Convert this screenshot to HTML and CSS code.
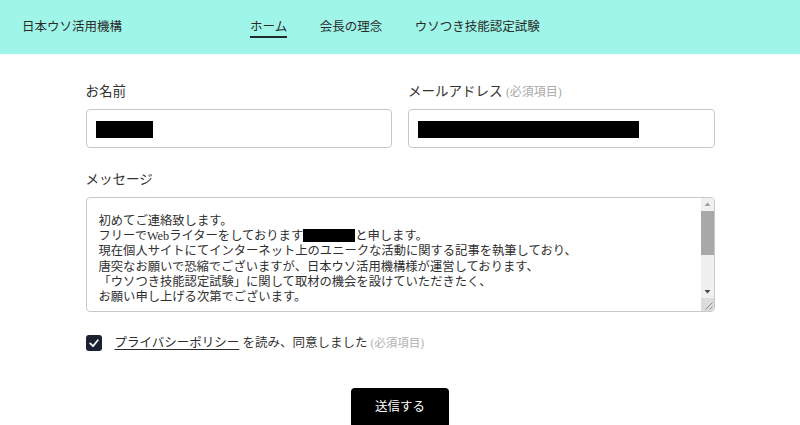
FILE: index.html
```html
<!DOCTYPE html>
<html lang="ja">
<head>
<meta charset="utf-8">
<title>お問い合わせ | 日本ウソ活用機構</title>
<link rel="stylesheet" href="styles.css">
</head>
<body>
<header class="site-header">
  <a class="logo" href="#">日本ウソ活用機構</a>
  <nav class="nav">
    <a class="nav-item active" href="#">ホーム</a>
    <a class="nav-item" href="#">会長の理念</a>
    <a class="nav-item" href="#">ウソつき技能認定試験</a>
  </nav>
</header>

<main class="contact">
  <div class="field-row">
    <div class="field">
      <div class="field-label">お名前</div>
      <div class="input"><span class="redact redact-name"></span></div>
    </div>
    <div class="field">
      <div class="field-label">メールアドレス <span class="required">(必須項目)</span></div>
      <div class="input"><span class="redact redact-mail"></span></div>
    </div>
  </div>

  <div class="field message-field">
    <div class="field-label">メッセージ</div>
    <div class="message-box">
      <div class="message-text" role="textbox" aria-multiline="true">初めてご連絡致します。<br>フリーでWebライターをしております<span class="redact redact-inline"></span>と申します。<br>現在個人サイトにてインターネット上のユニークな活動に関する記事を執筆しており、<br>唐突なお願いで恐縮でございますが、日本ウソ活用機構様が運営しております、<br>「ウソつき技能認定試験」に関して取材の機会を設けていただきたく、<br>お願い申し上げる次第でございます。</div>
      <div class="scrollbar" aria-hidden="true">
        <div class="sb-button">
          <svg width="13" height="13" viewBox="0 0 13 13"><path d="M3.5 8h6L6.5 4.5z" fill="#a0a0a0"/></svg>
        </div>
        <div class="sb-track"><div class="sb-thumb"></div></div>
        <div class="sb-button">
          <svg width="13" height="13" viewBox="0 0 13 13"><path d="M3.5 5h6L6.5 8.5z" fill="#4a4a4a"/></svg>
        </div>
        <div class="sb-corner">
          <svg width="13" height="13" viewBox="0 0 13 13"><path d="M11.5 4.5L4.5 11.5M11.5 8.5L8.5 11.5" stroke="#8a8a8a" stroke-width="1" fill="none"/></svg>
        </div>
      </div>
    </div>
  </div>

  <label class="agree">
    <span class="checkbox"><svg width="16" height="16" viewBox="0 0 16 16"><polyline points="4.2,8.4 7,11.2 11.8,5.2" fill="none" stroke="#fff" stroke-width="1.8" stroke-linecap="round" stroke-linejoin="round"/></svg></span>
    <span class="agree-text"><a class="policy-link" href="#">プライバシーポリシー</a> を読み、同意しました <span class="required small">(必須項目)</span></span>
  </label>

  <div class="actions">
    <button class="submit" type="button">送信する</button>
  </div>
</main>
</body>
</html>
```

FILE: styles.css
```css
html, body {
  margin: 0;
  padding: 0;
  background: #fff;
}

body {
  font-family: "Liberation Serif", "Noto Sans CJK JP", serif;
  color: #333;
  overflow: hidden;
}

a {
  color: inherit;
  text-decoration: none;
}

/* Header */
.site-header {
  display: flex;
  align-items: center;
  height: 54px;
  padding-left: 22px;
  background: #9ef5e8;
}

.logo {
  font-size: 12.5px;
  line-height: 16px;
  color: #2b2b2b;
}

.nav {
  display: flex;
  gap: 32.5px;
  margin-left: 128px;
}

.nav-item {
  font-size: 12.5px;
  line-height: 16px;
  padding: 3px 0 1px;
  border-bottom: 2px solid transparent;
  color: #2b2b2b;
}

.nav-item.active {
  border-bottom-color: #1e2a2a;
}

/* Form */
.contact {
  width: 629px;
  margin: 0 auto;
  padding-top: 28px;
}

.field-row {
  display: grid;
  grid-template-columns: 1fr 1fr;
  gap: 16px;
}

.field-label {
  font-size: 13.5px;
  line-height: 20px;
  margin-bottom: 7px;
  color: #333;
}

.required {
  font-size: 12px;
  color: #aaa;
}

.input {
  box-sizing: border-box;
  height: 39px;
  border: 1px solid #c8c8c8;
  border-radius: 4px;
  background: #fff;
  padding: 11px 9px 0;
  display: flex;
  align-items: flex-start;
}

.redact {
  display: inline-block;
  background: #000;
}

.redact-name {
  width: 57px;
  height: 17px;
}

.redact-mail {
  width: 221px;
  height: 17px;
}

.redact-inline {
  width: 52px;
  height: 13px;
  vertical-align: -2px;
}

.message-field {
  margin-top: 22px;
}

.message-box {
  box-sizing: border-box;
  height: 115px;
  border: 1px solid #c8c8c8;
  border-radius: 4px;
  display: flex;
  overflow: hidden;
  background: #fff;
}

.message-text {
  flex: 1;
  padding: 16px 12px 0;
  font-size: 12.3px;
  line-height: 15.2px;
  color: #2f2f2f;
}

/* Scrollbar drawn to match the classic textarea scrollbar */
.scrollbar {
  width: 13px;
  display: flex;
  flex-direction: column;
  background: #f0f0f0;
}

.sb-button {
  height: 13px;
  display: flex;
}

.sb-track {
  flex: 1;
}

.sb-thumb {
  height: 44px;
  background: #a8a8a8;
}

.sb-corner {
  height: 13px;
  background: #dcdcdc;
  display: flex;
}

/* Agreement */
.agree {
  display: flex;
  align-items: center;
  margin-top: 21px;
  height: 20px;
}

.checkbox {
  width: 16px;
  height: 16px;
  border-radius: 3px;
  background: #1c2030;
  display: inline-flex;
  flex-shrink: 0;
}

.agree-text {
  margin-left: 13px;
  font-size: 12.5px;
  line-height: 20px;
  color: #333;
}

.policy-link {
  text-decoration: underline;
  text-decoration-thickness: 1px;
  text-underline-offset: 2px;
  color: #2b2b2b;
}

.required.small {
  font-size: 11.5px;
  color: #b0b0b0;
}

/* Submit */
.actions {
  display: flex;
  justify-content: center;
  margin-top: 35px;
}

.submit {
  width: 98px;
  height: 40px;
  border: 0;
  border-radius: 4px;
  background: #000;
  color: #fff;
  font-family: "Liberation Serif", "Noto Sans CJK JP", serif;
  font-size: 12.5px;
  line-height: 16px;
  padding: 0 0 3px;
}
```
